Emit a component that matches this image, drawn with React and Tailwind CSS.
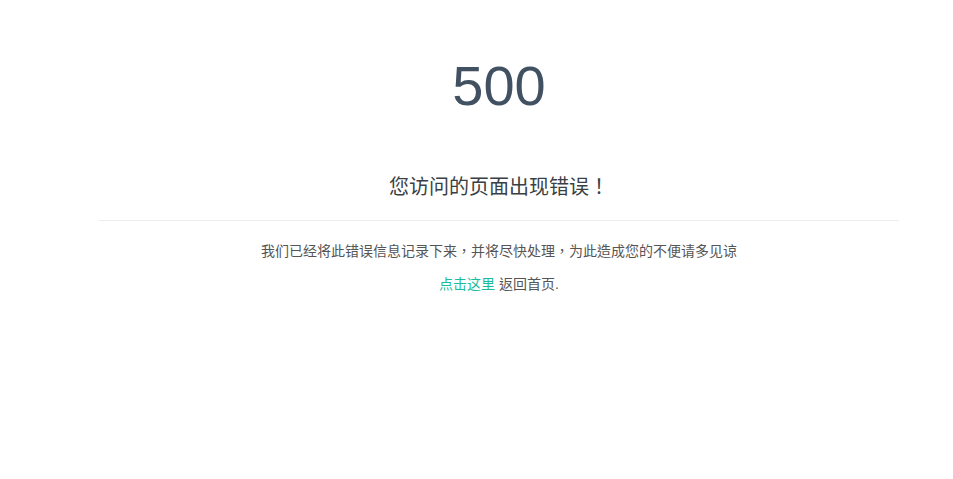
export default function App() {
    return (
        <div className="min-h-screen bg-white text-center" style={{ fontFamily: '"Liberation Sans", "Noto Sans CJK TC", sans-serif' }}>
            <div className="ml-[99px] w-[800px] pt-[48px]">
                <h1 className="text-[56px] leading-[76px] text-[#415162]">500</h1>
                <h3 className="mt-[49px] text-[20px] leading-[28px] text-[#3a3f45]">您访问的页面出现错误！</h3>
                <hr className="mt-[19px] border-t border-[#eeeeee]" />
                <p className="mt-[20px] text-[14px] leading-[20px] text-[#555555]">我们已经将此错误信息记录下来，并将尽快处理，为此造成您的不便请多见谅</p>
                <p className="mt-[13px] text-[14px] leading-[20px] text-[#555555]">
                    <a href="#" className="text-[#1abc9c]">点击这里</a> 返回首页.
                </p>
            </div>
        </div>
    )
}
